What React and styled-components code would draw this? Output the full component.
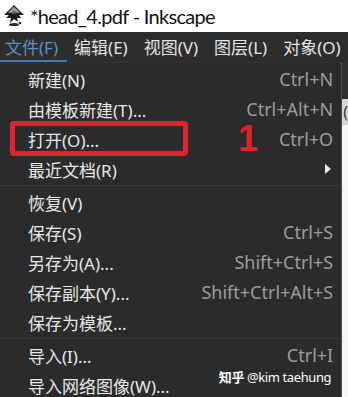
import styled, { createGlobalStyle } from "styled-components";

const GlobalStyle = createGlobalStyle`
    body {
        margin: 0;
        background: #ffffff;
        overflow: hidden;
    }
`;

const menus = [
    { label: "文件(F)", active: true },
    { label: "编辑(E)" },
    { label: "视图(V)" },
    { label: "图层(L)" },
    { label: "对象(O)" },
];

const groups = [
    [
        { label: "新建(N)", key: "Ctrl+N" },
        { label: "由模板新建(T)...", key: "Ctrl+Alt+N" },
        { label: "打开(O)...", key: "Ctrl+O", marked: true },
        { label: "最近文档(R)", sub: true },
    ],
    [
        { label: "恢复(V)" },
        { label: "保存(S)", key: "Ctrl+S" },
        { label: "另存为(A)...", key: "Shift+Ctrl+S" },
        { label: "保存副本(Y)...", key: "Shift+Ctrl+Alt+S" },
        { label: "保存为模板..." },
    ],
    [
        { label: "导入(I)...", key: "Ctrl+I" },
        { label: "导入网络图像(W)...", watermark: true },
    ],
];

const InkscapeIcon = () => (
    <svg width="24" height="24" viewBox="0 0 24 24">
        <path d="M12 1 L22 11 L17 11 L19 14 L15 14 L16 18 L12 15 L8 19 L9 14 L4 14 L7 11 L2 11 Z" fill="#1a1a1a" />
        <path d="M12 2.5 L18 8.5 L15 9 L12 7 L9 9 L6 8.5 Z" fill="#9a9a9a" />
        <path d="M12 7 L15 9 L12 10.5 L9 9 Z" fill="#5a5a5a" />
        <ellipse cx="12" cy="20.5" rx="5" ry="1.6" fill="#2a2a2a" />
        <circle cx="18" cy="19" r="1.3" fill="#2a2a2a" />
    </svg>
);

const App = () => {
    return <>
        <GlobalStyle />
        <Window>
            <TitleBar>
                <InkscapeIcon />
                <Title>*head_4.pdf - Inkscape</Title>
            </TitleBar>
            <MenuBar>
                {menus.map((m) => (
                    <MenuTitle key={m.label} $active={m.active}>{m.label}</MenuTitle>
                ))}
            </MenuBar>
            <Body>
                <Dropdown>
                    {groups.map((group, gi) => (
                        <Group key={gi}>
                            {gi > 0 && <Separator />}
                            {group.map((item) => (
                                <Item key={item.label}>
                                    <ItemLabel>{item.label}</ItemLabel>
                                    {item.key && <Shortcut>{item.key}</Shortcut>}
                                    {item.sub && <SubArrow />}
                                    {item.marked && <>
                                        <RedBox />
                                        <StepNumber>1</StepNumber>
                                    </>}
                                    {item.watermark && <Watermark><b>知乎</b> @kim taehung</Watermark>}
                                </Item>
                            ))}
                        </Group>
                    ))}
                </Dropdown>
                <Behind>
                    <BehindDark />
                    <BehindGray>(</BehindGray>
                    <BehindLight />
                </Behind>
            </Body>
        </Window>
    </>
}

export default App;

const Window = styled.div`
    width: 348px;
    height: 397px;
    display: flex;
    flex-direction: column;
    overflow: hidden;
    font-family: "Noto Sans", "Noto Sans CJK SC", sans-serif;
`;

const TitleBar = styled.div`
    height: 32px;
    flex-shrink: 0;
    display: flex;
    align-items: center;
    gap: 4px;
    padding-left: 2px;
    background: #ffffff;
`;

const Title = styled.span`
    font-family: Lato, "Noto Sans", sans-serif;
    font-size: 20px;
    color: #111111;
    letter-spacing: -0.7px;
`;

const MenuBar = styled.div`
    height: 30px;
    flex-shrink: 0;
    display: flex;
    align-items: stretch;
    background: #2d2d2d;
    overflow: hidden;
`;

const MenuTitle = styled.div`
    flex-shrink: 0;
    display: flex;
    align-items: center;
    white-space: nowrap;
    padding: 0 9px 0 5px;
    margin-right: 2px;
    font-size: 17px;
    color: ${(p) => (p.$active ? "#5b8fca" : "#e4e4e4")};
    border-bottom: 2px solid ${(p) => (p.$active ? "#3f78bd" : "transparent")};
`;

const Body = styled.div`
    flex: 1;
    display: flex;
`;

const Dropdown = styled.div`
    width: 342px;
    padding-top: 1px;
    background: #2b2b2b;
    border-right: 1px solid #4a4a4a;
    border-top: 1px solid #333333;
`;

const Group = styled.div`
    display: flex;
    flex-direction: column;
`;

const Separator = styled.div`
    height: 1px;
    margin: 1px 0 1px 0;
    background: #3a3a3a;
`;

const Item = styled.div`
    position: relative;
    height: 30px;
    display: flex;
    align-items: center;
    justify-content: space-between;
    padding: 0 8px 0 28px;
    font-size: 17px;
`;

const ItemLabel = styled.span`
    color: #e8e8e8;
`;

const Shortcut = styled.span`
    font-size: 18px;
    color: #9d9d9d;
`;

const SubArrow = styled.span`
    width: 0;
    height: 0;
    margin-right: 2px;
    border-top: 5px solid transparent;
    border-bottom: 5px solid transparent;
    border-left: 6px solid #eeeeee;
`;

const RedBox = styled.div`
    position: absolute;
    left: 10px;
    top: -3px;
    width: 168px;
    height: 25px;
    border: 5px solid #e3222f;
    border-radius: 4px;
`;

const StepNumber = styled.span`
    position: absolute;
    left: 238px;
    top: -4px;
    font-family: "Liberation Sans Narrow", "Liberation Sans", sans-serif;
    font-weight: bold;
    font-size: 36px;
    line-height: 38px;
    color: #e3222f;
`;

const Watermark = styled.span`
    position: absolute;
    right: 10px;
    top: -3px;
    font-size: 13px;
    letter-spacing: -0.4px;
    color: #ffffff;
    b {
        font-weight: bold;
    }
`;

const Behind = styled.div`
    flex: 1;
    display: flex;
    flex-direction: column;
`;

const BehindDark = styled.div`
    height: 37px;
    background: #303030;
`;

const BehindGray = styled.div`
    height: 26px;
    background: #d6d6d6;
    color: #333333;
    font-size: 16px;
    line-height: 26px;
    padding-left: 1px;
    overflow: hidden;
`;

const BehindLight = styled.div`
    flex: 1;
    background: #f6f6f6;
`;
